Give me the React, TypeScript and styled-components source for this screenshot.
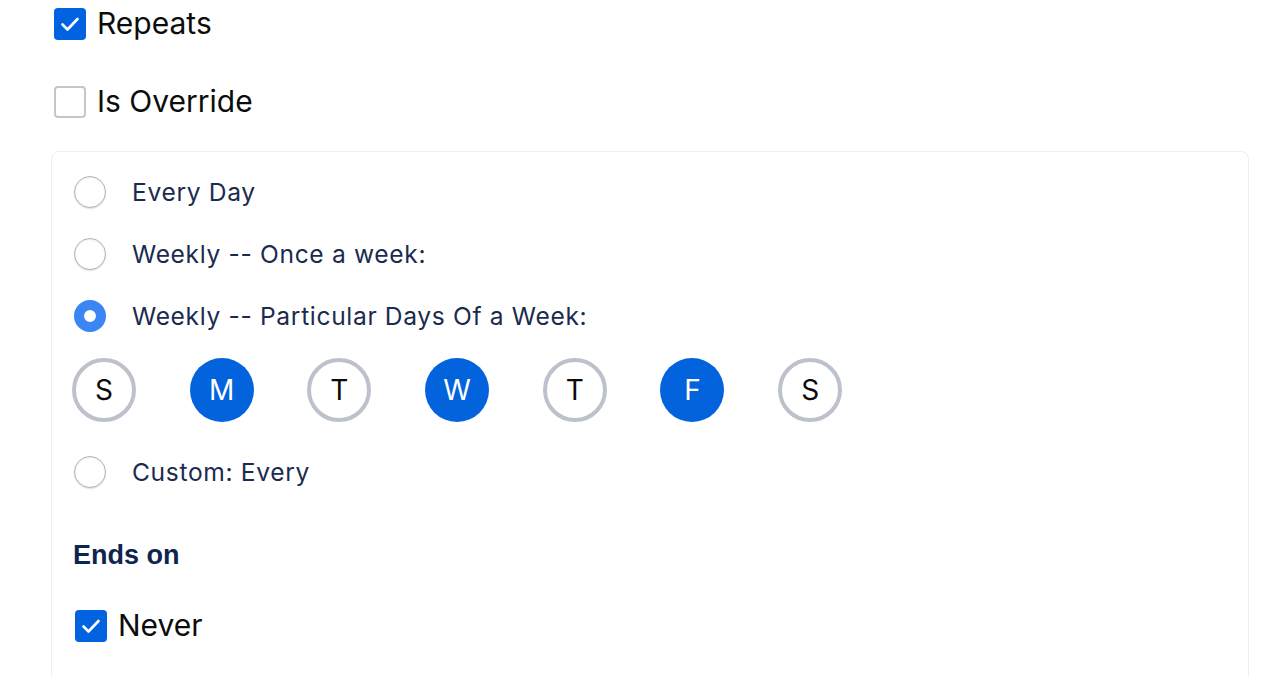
import React, { useState } from 'react'
import styled, { createGlobalStyle } from 'styled-components'

const GlobalStyle = createGlobalStyle`
  body {
    margin: 0;
    background: #ffffff;
    font-family: Inter, 'Noto Sans', sans-serif;
  }
`

const StyledPage = styled.div`
  display: flex;
  flex-direction: column;
  padding: 0 39px 0 51px;
  height: 676px;
  overflow: hidden;
`

const CheckRow = styled.label<{ $top?: number }>`
  display: flex;
  align-items: center;
  gap: 11px;
  height: 48px;
  flex-shrink: 0;
  margin-top: ${(p) => p.$top ?? 0}px;
  padding-left: 3px;
  cursor: pointer;
`

const Box = styled.span<{ $checked: boolean }>`
  box-sizing: border-box;
  width: 32px;
  height: 32px;
  border-radius: 4px;
  display: flex;
  align-items: center;
  justify-content: center;
  background: ${(p) => (p.$checked ? '#0263e0' : '#ffffff')};
  border: ${(p) => (p.$checked ? 'none' : '2px solid #c2c6cf')};
`

const CheckText = styled.span<{ $size?: number }>`
  font-family: Inter, sans-serif;
  font-size: ${(p) => p.$size ?? 30}px;
  line-height: 1;
  margin-top: -3px;
  color: #0c0c0c;
`

const Card = styled.div`
  margin-top: 25px;
  border: 1px solid #eeeeee;
  border-radius: 8px;
  padding: 9px 20px 0 20px;
  display: flex;
  flex-direction: column;
  flex-shrink: 0;
  height: 620px;
`

const RadioRow = styled.label<{ $top?: number }>`
  display: flex;
  align-items: center;
  gap: 26px;
  height: 62px;
  flex-shrink: 0;
  padding-left: 2px;
  margin-top: ${(p) => p.$top ?? 0}px;
  cursor: pointer;
`

const RadioDot = styled.span<{ $checked: boolean }>`
  box-sizing: border-box;
  width: 32px;
  height: 32px;
  border-radius: 50%;
  background: #ffffff;
  border: ${(p) => (p.$checked ? '10px solid #3a86f4' : '1.5px solid #b4b4b4')};
  box-shadow: ${(p) =>
    p.$checked ? 'none' : 'inset 0 1px 2px rgba(0,0,0,0.08), 0 1px 1px rgba(0,0,0,0.12)'};
`

const RadioText = styled.span`
  font-family: Inter, 'Noto Sans', sans-serif;
  font-size: 24.6px;
  font-weight: 400;
  letter-spacing: 0.65px;
  color: #1b2b4f;
`

const DaysRow = styled.div`
  display: flex;
  gap: 53.7px;
  margin-top: 11px;
  height: 64px;
  flex-shrink: 0;
`

const Day = styled.button<{ $active: boolean }>`
  box-sizing: border-box;
  width: 64px;
  height: 64px;
  border-radius: 50%;
  padding: 0;
  display: flex;
  align-items: center;
  justify-content: center;
  font-family: Inter, sans-serif;
  font-size: 28px;
  cursor: pointer;
  background: ${(p) => (p.$active ? '#0263dc' : '#ffffff')};
  color: ${(p) => (p.$active ? '#ffffff' : '#0a0a0a')};
  border: ${(p) => (p.$active ? 'none' : '4px solid #bcc1cc')};
`

const SectionTitle = styled.div`
  margin-top: 36px;
  height: 32px;
  flex-shrink: 0;
  display: flex;
  align-items: center;
  padding-left: 1px;
  font-family: 'Liberation Sans', Arial, sans-serif;
  font-weight: 700;
  font-size: 27px;
  color: #10254e;
`

const Check = ({ checked }: { checked: boolean }): JSX.Element => (
  <Box $checked={checked}>
    {checked && (
      <svg width="24" height="24" viewBox="0 0 24 24" fill="none">
        <path
          d="M4.5 12.5 L9.5 17.5 L19.5 7"
          stroke="#ffffff"
          strokeWidth="2.6"
          strokeLinecap="round"
          strokeLinejoin="round"
        />
      </svg>
    )}
  </Box>
)

const DAYS = ['S', 'M', 'T', 'W', 'T', 'F', 'S']

const App = (): JSX.Element => {
  const [repeats, setRepeats] = useState(true)
  const [override, setOverride] = useState(false)
  const [mode, setMode] = useState('particular')
  const [days, setDays] = useState([false, true, false, true, false, true, false])
  const [never, setNever] = useState(true)

  const options = [
    { key: 'daily', label: 'Every Day' },
    { key: 'weekly', label: 'Weekly -- Once a week:' },
    { key: 'particular', label: 'Weekly -- Particular Days Of a Week:' }
  ]

  return (
    <>
      <GlobalStyle />
      <StyledPage>
        <CheckRow onClick={() => setRepeats(!repeats)}>
          <Check checked={repeats} />
          <CheckText>Repeats</CheckText>
        </CheckRow>
        <CheckRow $top={30} onClick={() => setOverride(!override)}>
          <Check checked={override} />
          <CheckText>Is Override</CheckText>
        </CheckRow>
        <Card>
          {options.map((o) => (
            <RadioRow key={o.key} onClick={() => setMode(o.key)}>
              <RadioDot $checked={mode === o.key} />
              <RadioText>{o.label}</RadioText>
            </RadioRow>
          ))}
          <DaysRow>
            {DAYS.map((d, i) => (
              <Day
                key={i}
                $active={days[i]}
                onClick={() => {
                  const next = [...days]
                  next[i] = !next[i]
                  setDays(next)
                }}
              >
                {d}
              </Day>
            ))}
          </DaysRow>
          <RadioRow $top={19} onClick={() => setMode('custom')}>
            <RadioDot $checked={mode === 'custom'} />
            <RadioText>Custom: Every</RadioText>
          </RadioRow>
          <SectionTitle>Ends on</SectionTitle>
          <CheckRow $top={31} onClick={() => setNever(!never)}>
            <Check checked={never} />
            <CheckText $size={30}>Never</CheckText>
          </CheckRow>
        </Card>
      </StyledPage>
    </>
  )
}

export default App
